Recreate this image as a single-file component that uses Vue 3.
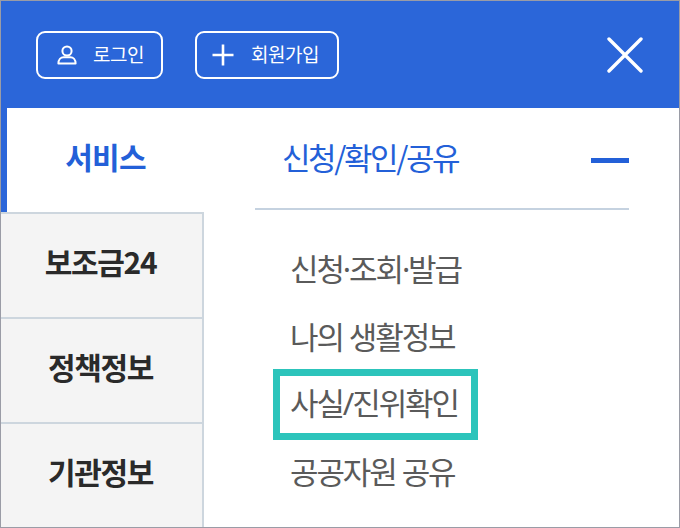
<script setup>
const tabs = ['보조금24', '정책정보', '기관정보']
const items = ['신청·조회·발급', '나의 생활정보', '사실/진위확인', '공공자원 공유']
const marked = '사실/진위확인'
</script>

<template>
  <div class="frame">
    <header class="top">
      <div class="btns">
        <a class="btn login">
          <svg class="ic-user" width="20" height="20" viewBox="0 0 20 20" fill="none" stroke="#fff" stroke-width="2">
            <circle cx="10" cy="6" r="4.6" />
            <path d="M1.4 18.6c0-4 2.4-6.4 5.2-6.4h6.8c2.8 0 5.2 2.4 5.2 6.4z" stroke-linejoin="round" />
          </svg>
          <span>로그인</span>
        </a>
        <a class="btn join">
          <svg width="22" height="22" viewBox="0 0 22 22" stroke="#fff" stroke-width="2.6">
            <path d="M11 0.5v21M0.5 11h21" />
          </svg>
          <span>회원가입</span>
        </a>
      </div>
      <svg class="close" width="36" height="36" viewBox="0 0 36 36" stroke="#fff" stroke-width="3.4" stroke-linecap="round">
        <path d="M2 2l32 32M34 2L2 34" />
      </svg>
    </header>
    <div class="body">
      <nav class="side">
        <div class="tab active">서비스</div>
        <div v-for="t in tabs" :key="t" class="tab">{{ t }}</div>
      </nav>
      <section class="main">
        <div class="head">
          <span>신청/확인/공유</span>
          <i class="minus"></i>
        </div>
        <ul class="list">
          <li v-for="it in items" :key="it" :class="{ marked: it === marked }">{{ it }}</li>
        </ul>
      </section>
    </div>
  </div>
</template>

<style>
html, body { margin: 0; background: #fff; }
</style>

<style scoped>
.frame {
  width: 680px;
  height: 528px;
  box-sizing: border-box;
  border: 1px solid #9a9ca6;
  overflow: hidden;
  background: #fff;
  font-family: "Noto Sans CJK KR", "Noto Sans", sans-serif;
  display: flex;
  flex-direction: column;
}
.top {
  height: 107px;
  flex: none;
  background: #2b66d9;
  display: flex;
  align-items: center;
  justify-content: space-between;
  padding: 1px 36px 0 35px;
  box-sizing: border-box;
}
.btns { display: flex; gap: 32px; }
.btn {
  height: 48px;
  box-sizing: border-box;
  border: 2px solid #fff;
  border-radius: 9px;
  display: flex;
  align-items: center;
  color: #fff;
  font-size: 19px;
  letter-spacing: -0.5px;
}
.login { width: 127px; padding-left: 19px; gap: 16px; }
.join { width: 144px; padding-left: 15px; gap: 17px; }
.btn span { position: relative; top: -2px; }
.side {
  width: 203px;
  flex: none;
  display: flex;
  flex-direction: column;
}
.body { flex: 1; display: flex; min-height: 0; }
.tab {
  height: 105px;
  flex: none;
  box-sizing: border-box;
  background: #f4f4f4;
  border-top: 2px solid #cdd6de;
  border-right: 2px solid #cdd6de;
  display: flex;
  align-items: center;
  justify-content: center;
  padding-bottom: 9px;
  padding-right: 2px;
  font-size: 30px;
  font-weight: 700;
  letter-spacing: -1.3px;
  color: #2a2a2a;
}
.tab.active {
  height: 104px;
  background: #fff;
  border: 0;
  border-left: 6px solid #2b66d9;
  color: #2360d8;
  padding-right: 0;
  letter-spacing: -0.8px;
}
.main {
  flex: 1;
  padding-left: 51px;
  padding-right: 50px;
}
.head {
  height: 102px;
  box-sizing: border-box;
  border-bottom: 2px solid #c5d2e0;
  display: flex;
  align-items: center;
  justify-content: space-between;
  padding-left: 27px;
  padding-bottom: 4px;
  color: #2360d8;
  font-size: 31px;
  letter-spacing: -2.4px;
}
.minus {
  width: 38px;
  height: 5px;
  margin-top: 8px;
  background: #2360d8;
}
.list {
  list-style: none;
  margin: 0;
  padding: 24px 0 0 18px;
  display: flex;
  flex-direction: column;
  align-items: flex-start;
  font-family: "Noto Sans", "Noto Sans CJK KR", sans-serif;
}
.list li {
  height: 67.5px;
  box-sizing: border-box;
  display: flex;
  align-items: center;
  padding-left: 17px;
  font-size: 31px;
  letter-spacing: -2.1px;
  color: #5a5a5a;
  white-space: nowrap;
}
.list li.marked {
  height: 71px;
  width: 205px;
  margin: 0 0 -3px 0;
  padding: 0 0 6px 10px;
  border: 7px solid #2cc4bb;
}
</style>
